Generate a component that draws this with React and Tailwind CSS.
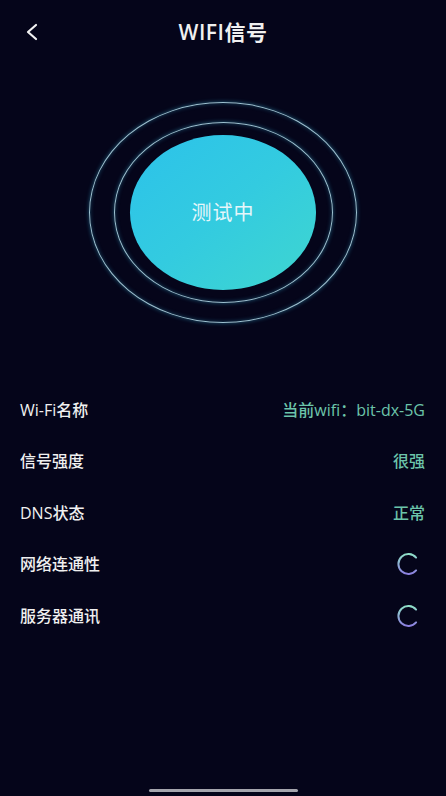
import React from "react";

function Spinner() {
  return (
    <svg width="24" height="24" viewBox="0 0 24 24" fill="none">
      <defs>
        <linearGradient id="spg" x1="0" y1="0" x2="0" y2="1">
          <stop offset="0" stopColor="#8fe0c8" />
          <stop offset="1" stopColor="#8c7fe0" />
        </linearGradient>
      </defs>
      <path
        d="M19.1 5.6 A10 10 0 1 0 19.1 18.4"
        stroke="url(#spg)"
        strokeWidth="2"
        strokeLinecap="round"
      />
    </svg>
  );
}

const rows = [
  { label: "Wi-Fi名称", value: "当前wifi：bit-dx-5G" },
  { label: "信号强度", value: "很强" },
  { label: "DNS状态", value: "正常" },
  { label: "网络连通性", spin: true },
  { label: "服务器通讯", spin: true },
];

export default function App() {
  return (
    <div
      className="w-[446px] h-[796px] bg-[#05051a] text-white flex flex-col overflow-hidden"
      style={{ fontFamily: '"Open Sans", "Noto Sans CJK SC", sans-serif' }}
    >
      <div className="h-[66px] flex items-center relative shrink-0">
        <svg className="absolute left-[25px] top-[23px]" width="14" height="18" viewBox="0 0 14 18" fill="none">
          <path d="M11 2 L3 9 L11 16" stroke="#f2f2f2" strokeWidth="2.2" strokeLinecap="round" strokeLinejoin="round" />
        </svg>
        <div className="w-full text-center text-[21px] font-semibold tracking-[0.5px] text-[#f0f0f0]">WIFI信号</div>
      </div>

      <div className="flex justify-center pt-[36px]">
        <div className="w-[268px] h-[221px] rounded-[50%] border-[1.5px] border-[#9cc0d0] shadow-[0_0_4px_rgba(60,190,230,0.45),inset_0_0_4px_rgba(60,190,230,0.35)] flex items-center justify-center">
          <div className="w-[219px] h-[181px] rounded-[50%] border-[1.5px] border-[#9cc0d0] shadow-[0_0_4px_rgba(60,190,230,0.45),inset_0_0_4px_rgba(60,190,230,0.35)] flex items-center justify-center">
            <div className="w-[186px] h-[155px] rounded-[50%] bg-gradient-to-br from-[#2cc2ea] via-[#33cbe0] to-[#3fd6cf] flex items-center justify-center">
              <span className="text-[20px] text-[#e6f6fa] tracking-[1px]">测试中</span>
            </div>
          </div>
        </div>
      </div>

      <div className="flex flex-col mt-[61px]">
        {rows.map((r) => (
          <div key={r.label} className="h-[51.5px] flex items-center justify-between pl-[20px] pr-[21px]">
            <span className="text-[16px] font-medium text-[#f0f0f0]">{r.label}</span>
            {r.spin ? (
              <div className="mr-[4px]">
                <Spinner />
              </div>
            ) : (
              <span className="text-[16px] font-medium text-[#6cc4aa]">{r.value}</span>
            )}
          </div>
        ))}
      </div>

      <div className="flex-1" />
      <div className="flex justify-center pb-[4px]">
        <div className="w-[149px] h-[3px] rounded-full bg-[#a5a5ad]" />
      </div>
    </div>
  );
}
